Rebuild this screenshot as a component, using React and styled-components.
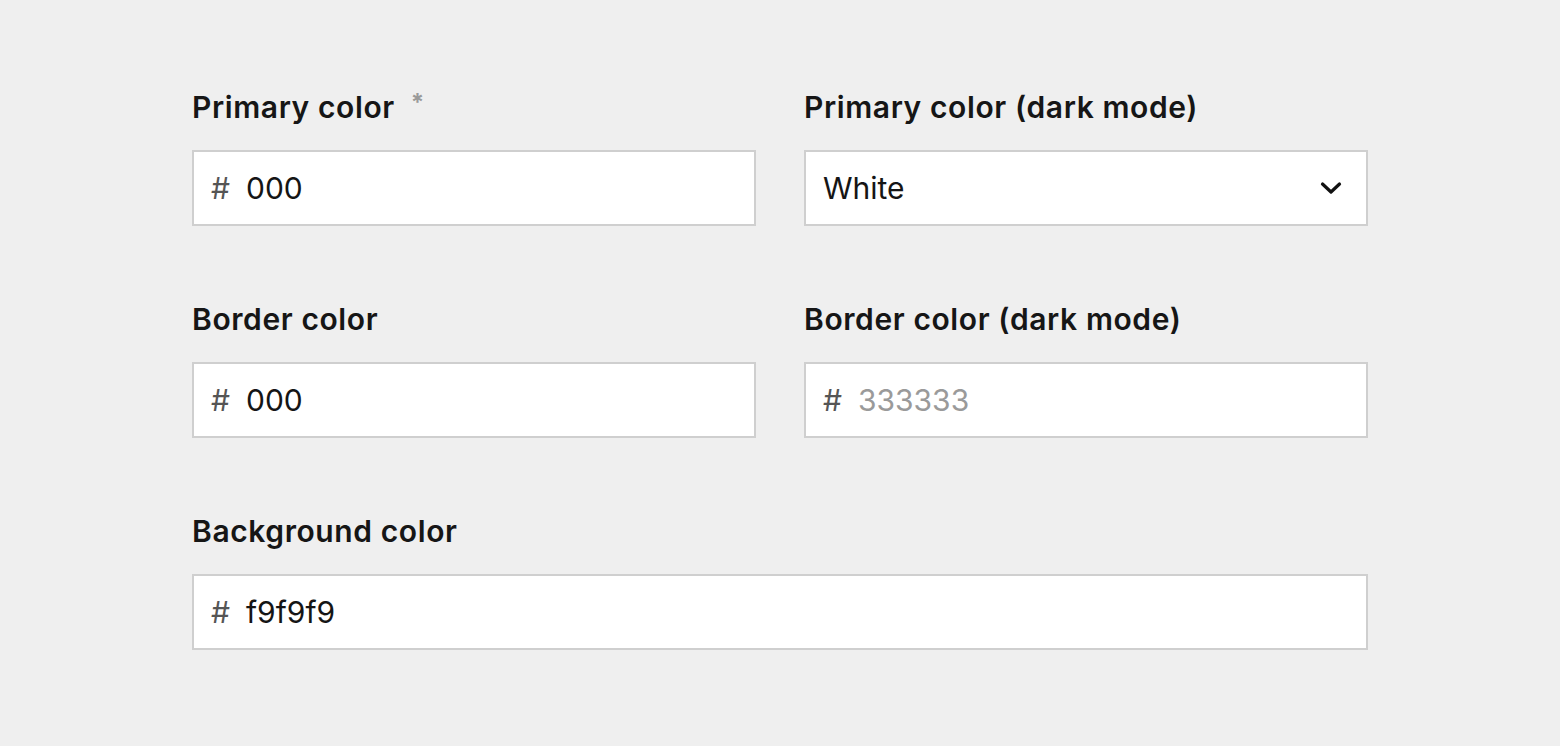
import React from "react";
import styled, { createGlobalStyle } from "styled-components";

const GlobalStyle = createGlobalStyle`
  body {
    margin: 0;
    background: #efefef;
    font-family: Inter, "Noto Sans", sans-serif;
  }
`;

const Page = styled.div`
  padding: 89px 192px 0 192px;
  width: 1176px;
  display: grid;
  grid-template-columns: 1fr 1fr;
  column-gap: 48px;
  row-gap: 75px;
`;

const Field = styled.div`
  display: flex;
  flex-direction: column;
  grid-column: ${(props) => (props.full ? "1 / span 2" : "auto")};
`;

const Label = styled.label`
  font-size: 30px;
  line-height: 36px;
  letter-spacing: 0.6px;
  font-weight: 600;
  color: #161616;
  margin-bottom: 25px;
  display: flex;
  align-items: flex-start;
`;

const Required = styled.span`
  color: #9a9a9a;
  font-size: 24px;
  line-height: 24px;
  font-weight: 700;
  margin-left: 16px;
  margin-top: 2px;
`;

const InputBox = styled.div`
  height: 72px;
  box-sizing: content-box;
  border: 2px solid #cfcfcf;
  background: #fff;
  display: flex;
  align-items: center;
  padding: 0 24px 0 17px;
  font-size: 30px;
`;

const Hash = styled.span`
  color: #555;
  margin-right: 16px;
`;

const Value = styled.span`
  color: ${(props) => (props.placeholder ? "#9a9a9a" : "#151515")};
  flex: 1;
`;

const Chevron = () => (
  <svg width="22" height="14" viewBox="0 0 22 14">
    <path d="M2.5 3 L11 11 L19.5 3" fill="none" stroke="#111" strokeWidth="3.2" strokeLinecap="round" strokeLinejoin="round" />
  </svg>
);

function ColorInput({ value, placeholder }) {
  return (
    <InputBox>
      <Hash>#</Hash>
      <Value placeholder={placeholder ? 1 : undefined}>{value || placeholder}</Value>
    </InputBox>
  );
}

export default function App() {
  return (
    <>
      <GlobalStyle />
      <Page>
        <Field>
          <Label>
            Primary color<Required>*</Required>
          </Label>
          <ColorInput value="000" />
        </Field>
        <Field>
          <Label>Primary color (dark mode)</Label>
          <InputBox>
            <Value>White</Value>
            <Chevron />
          </InputBox>
        </Field>
        <Field>
          <Label>Border color</Label>
          <ColorInput value="000" />
        </Field>
        <Field>
          <Label>Border color (dark mode)</Label>
          <ColorInput placeholder="333333" />
        </Field>
        <Field full>
          <Label>Background color</Label>
          <ColorInput value="f9f9f9" />
        </Field>
      </Page>
    </>
  );
}
